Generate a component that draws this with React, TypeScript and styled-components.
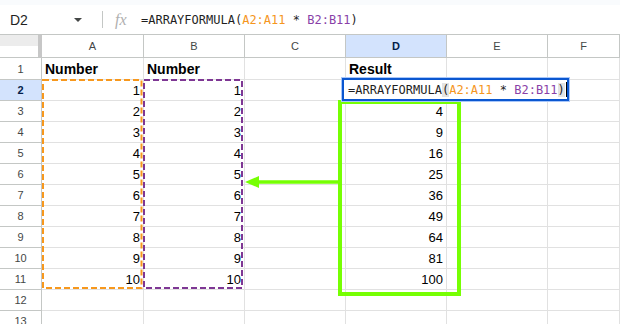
import React from 'react';
import styled, { createGlobalStyle } from 'styled-components';

const Global = createGlobalStyle`
  html, body {
    margin: 0;
    padding: 0;
    background: #ffffff;
  }
  body {
    font-family: "Liberation Sans", Arial, sans-serif;
  }
`;

const Frame = styled.div`
  position: relative;
  width: 620px;
  height: 324px;
  overflow: hidden;
  background: #ffffff;
`;

const TopStrip = styled.div`
  height: 5px;
  background: #f9fbfd;
`;

const FormulaBar = styled.div`
  display: flex;
  align-items: center;
  height: 29px;
  border-bottom: 1px solid #c4c7c5;
  background: #ffffff;
`;

const NameBox = styled.div`
  display: flex;
  align-items: center;
  justify-content: space-between;
  width: 92px;
  padding: 0 10px 0 10px;
  box-sizing: border-box;
  font-size: 14px;
  color: #1f1f1f;
`;

const Caret = styled.span`
  width: 0;
  height: 0;
  border-left: 4px solid transparent;
  border-right: 4px solid transparent;
  border-top: 4px solid #444746;
`;

const Divider = styled.div`
  width: 1px;
  height: 17px;
  margin-left: 10px;
  background: #c4c7c5;
`;

const Fx = styled.span`
  margin-left: 12px;
  width: 26px;
  font-family: "Liberation Serif", serif;
  font-style: italic;
  font-size: 16px;
  color: #b0b0b0;
`;

const Formula = styled.div`
  font-family: "DejaVu Sans Mono", "Liberation Mono", monospace;
  font-size: 12px;
  color: #1f1f1f;
  white-space: pre;
`;

const Ref = styled.span<{ $color: string }>`
  color: ${(p) => p.$color};
`;

const Grid = styled.div`
  display: grid;
  grid-template-columns: 42px 102px repeat(4, 101px) 1fr;
  grid-template-rows: 23px 22px;
  grid-auto-rows: 21px;
`;

const Corner = styled.div`
  background: linear-gradient(#ececec 0 11px, #ffffff 11px);
  border-right: 4px solid #c7c7c7;
  border-bottom: 1px solid #c4c7c5;
`;

const ColHeader = styled.div<{ $active?: boolean }>`
  display: flex;
  align-items: center;
  justify-content: center;
  font-size: 11px;
  color: ${(p) => (p.$active ? '#041e49' : '#444746')};
  font-weight: ${(p) => (p.$active ? 700 : 400)};
  background: ${(p) => (p.$active ? '#d3e3fd' : '#ffffff')};
  border-right: 1px solid #c4c7c5;
  border-bottom: 1px solid #c4c7c5;
`;

const RowHeader = styled.div<{ $active?: boolean }>`
  display: flex;
  align-items: center;
  justify-content: center;
  font-size: 11px;
  color: ${(p) => (p.$active ? '#041e49' : '#444746')};
  font-weight: ${(p) => (p.$active ? 700 : 400)};
  background: ${(p) => (p.$active ? '#d3e3fd' : '#ffffff')};
  border-right: 1px solid #c4c7c5;
  border-bottom: 1px solid #c4c7c5;
`;

const Cell = styled.div<{ $align?: 'left' | 'right'; $bold?: boolean }>`
  display: flex;
  align-items: flex-end;
  justify-content: ${(p) => (p.$align === 'right' ? 'flex-end' : 'flex-start')};
  padding: 0 3px 2px 3px;
  box-sizing: border-box;
  font-size: ${(p) => (p.$bold ? '14px' : '13px')};
  font-weight: ${(p) => (p.$bold ? 700 : 400)};
  color: #000000;
  border-right: 1px solid #e1e1e1;
  border-bottom: 1px solid #e1e1e1;
  overflow: hidden;
  white-space: nowrap;
`;

const Editor = styled.div`
  position: absolute;
  left: 342px;
  top: 78px;
  width: 227px;
  height: 23px;
  box-sizing: border-box;
  display: flex;
  align-items: center;
  padding-left: 4px;
  background: #ffffff;
  border: 2px solid #0b57d0;
  box-shadow: 0 0 0 1px #a8c7fa;
  font-family: "DejaVu Sans Mono", "Liberation Mono", monospace;
  font-size: 12px;
  color: #1f1f1f;
  white-space: pre;
`;

const Paren = styled.span`
  background: #e3e3e3;
`;

const CursorBar = styled.span`
  display: inline-block;
  width: 1px;
  height: 15px;
  margin-left: 1px;
  background: #000000;
`;

const Annotations = styled.svg`
  position: absolute;
  left: 0;
  top: 0;
  pointer-events: none;
`;

const rows = Array.from({ length: 13 }, (_, i) => i + 1);
const cols = ['A', 'B', 'C', 'D', 'E', 'F'];

function cellValue(row: number, col: string): { text: string; bold?: boolean; right?: boolean } {
  if (row === 1) {
    if (col === 'A' || col === 'B') return { text: 'Number', bold: true };
    if (col === 'D') return { text: 'Result', bold: true };
    return { text: '' };
  }
  if (row >= 2 && row <= 11) {
    const n = row - 1;
    if (col === 'A' || col === 'B') return { text: String(n), right: true };
    if (col === 'D' && row >= 3) return { text: String(n * n), right: true };
  }
  return { text: '' };
}

export default function App() {
  return (
    <Frame>
      <Global />
      <TopStrip />
      <FormulaBar>
        <NameBox>
          D2
          <Caret />
        </NameBox>
        <Divider />
        <Fx>fx</Fx>
        <Formula>
          =ARRAYFORMULA(<Ref $color="#f5961d">A2:A11</Ref> * <Ref $color="#8a3fa8">B2:B11</Ref>)
        </Formula>
      </FormulaBar>
      <Grid>
        <Corner />
        {cols.map((c) => (
          <ColHeader key={c} $active={c === 'D'}>
            {c}
          </ColHeader>
        ))}
        {rows.map((r) => (
          <React.Fragment key={r}>
            <RowHeader $active={r === 2}>{r}</RowHeader>
            {cols.map((c) => {
              const v = cellValue(r, c);
              return (
                <Cell key={c} $align={v.right ? 'right' : 'left'} $bold={v.bold}>
                  {v.text}
                </Cell>
              );
            })}
          </React.Fragment>
        ))}
      </Grid>
      <Annotations width="620" height="324">
        <rect x="43" y="80" width="98.5" height="208" fill="none" stroke="#f7981d" strokeWidth="2" strokeDasharray="6 3" />
        <rect x="144" y="80" width="98" height="208" fill="none" stroke="#7e3794" strokeWidth="2" strokeDasharray="6 3" />
        <rect x="340" y="102" width="119" height="192" fill="none" stroke="#76ff03" strokeWidth="4" />
        <line x1="340" y1="182" x2="256" y2="182" stroke="#76ff03" strokeWidth="3.5" />
        <polygon points="245,182 259,176 259,188" fill="#76ff03" />
      </Annotations>
      <Editor>
        =ARRAYFORMULA<Paren>(</Paren>
        <Ref $color="#f5961d">A2:A11</Ref> * <Ref $color="#8a3fa8">B2:B11</Ref>
        <Paren>)</Paren>
        <CursorBar />
      </Editor>
    </Frame>
  );
}
